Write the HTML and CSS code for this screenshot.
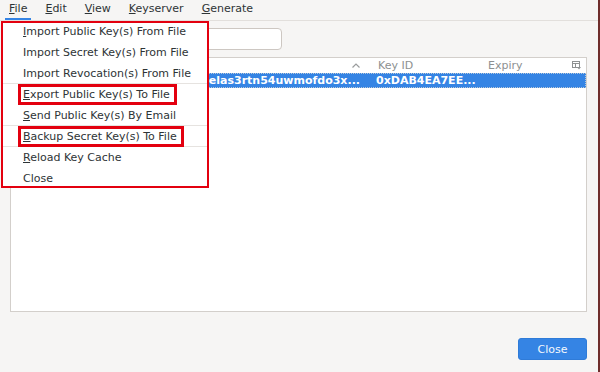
FILE: index.html
```html
<!DOCTYPE html>
<html>
<head>
    <title>Kleopatra</title>
    <link rel="stylesheet" href="styles.css">
</head>
<body>
    <div class="window">
        <nav class="menubar">
            <span class="menubar-item active"><u>F</u>ile</span>
            <span class="menubar-item"><u>E</u>dit</span>
            <span class="menubar-item"><u>V</u>iew</span>
            <span class="menubar-item"><u>K</u>eyserver</span>
            <span class="menubar-item"><u>G</u>enerate</span>
        </nav>

        <main class="content">
            <div class="search-row">
                <div class="search-entry"></div>
            </div>

            <div class="key-table">
                <div class="table-head">
                    <div class="col col-name">
                        <svg class="sort-arrow" width="8" height="5" viewBox="0 0 8 5">
                            <polyline points="0.5,4.5 4,1 7.5,4.5" fill="none" stroke="#9a9c9d" stroke-width="1.2"/>
                        </svg>
                    </div>
                    <div class="col col-id">Key ID</div>
                    <div class="col col-expiry">Expiry</div>
                    <div class="col col-menu">
                        <svg width="9" height="9" viewBox="0 0 9 9">
                            <rect x="0.5" y="0.5" width="7" height="6" fill="none" stroke="#8e9192"/>
                            <line x1="0.5" y1="2.5" x2="7.5" y2="2.5" stroke="#8e9192"/>
                            <line x1="3.5" y1="2.5" x2="3.5" y2="6.5" stroke="#8e9192"/>
                            <polygon points="5,6 9,6 7,8.5" fill="#8e9192"/>
                        </svg>
                    </div>
                </div>
                <div class="table-row selected">
                    <div class="col col-name">elas3rtn54uwmofdo3x...</div>
                    <div class="col col-id">0xDAB4EA7EE...</div>
                    <div class="col col-expiry"></div>
                    <div class="col col-menu"></div>
                </div>
            </div>

            <div class="footer">
                <button class="btn-close">Close</button>
            </div>
        </main>

        <div class="file-menu">
            <div class="menu-list">
                <div class="menu-item"><span><u>I</u>mport Public Key(s) From File</span></div>
                <div class="menu-item"><span>Import Secret Key(s) From File</span></div>
                <div class="menu-item sep"><span>Import Revocation(s) From File</span></div>
                <div class="menu-item"><span class="marked"><u>E</u>xport Public Key(s) To File</span></div>
                <div class="menu-item sep"><span><u>S</u>end Public Key(s) By Email</span></div>
                <div class="menu-item sep"><span class="marked"><u>B</u>ackup Secret Key(s) To File</span></div>
                <div class="menu-item"><span><u>R</u>eload Key Cache</span></div>
                <div class="menu-item"><span>Close</span></div>
            </div>
        </div>
    </div>
</body>
</html>
```

FILE: styles.css
```css
body {
    margin: 0;
    padding: 0;
    background-color: #f6f5f4;
    font-family: "DejaVu Sans", sans-serif;
    font-size: 11px;
    color: #2e3436;
}

.window {
    position: relative;
    height: 372px;
    border-right: 2px solid #6e2d2b;
    box-sizing: border-box;
    display: flex;
    flex-direction: column;
}

/* menubar */
.menubar {
    display: flex;
    height: 20px;
    border-bottom: 1px solid #e2dfdc;
}

.menubar-item {
    margin: 0 5px;
    padding: 0 4px;
    line-height: 18px;
    border-bottom: 2px solid transparent;
}

.menubar-item.active {
    border-bottom-color: #3584e4;
}

/* main area */
.content {
    flex: 1;
    display: flex;
    flex-direction: column;
    padding: 7px 11px 0 10px;
}

.search-row {
    display: flex;
    height: 22px;
}

.search-entry {
    width: 272px;
    background-color: #ffffff;
    border: 1px solid #cdc7c2;
    border-radius: 4px;
    box-sizing: border-box;
}

.key-table {
    margin-top: 7px;
    height: 255px;
    background-color: #ffffff;
    border: 1px solid #d3cfcb;
    box-sizing: border-box;
}

.table-head,
.table-row {
    display: grid;
    grid-template-columns: 359px 112px 84px 20px;
    height: 15px;
    align-items: center;
}

.table-head {
    color: #8d9091;
}

.table-head .col-name {
    display: flex;
    justify-content: flex-end;
    padding-right: 10px;
}

.table-head .col-id {
    padding-left: 8px;
}

.col {
    white-space: nowrap;
    overflow: hidden;
}

.col-expiry {
    padding-left: 6px;
}

.col-menu {
    display: flex;
    padding-left: 6px;
}

.table-row.selected {
    background-color: #3584e4;
    color: #ffffff;
    font-weight: bold;
    outline: 1px dotted #b9c8d8;
    outline-offset: -1px;
}

.table-row .col-name {
    text-align: right;
    padding-right: 10px;
}

.table-row .col-id {
    padding-left: 6px;
}

/* bottom buttons */
.footer {
    display: flex;
    justify-content: flex-end;
    padding-top: 26px;
}

.btn-close {
    width: 69px;
    height: 22px;
    border: 1px solid #2f7bd8;
    border-radius: 3px;
    background-color: #3584e4;
    color: #f4f8fd;
    font-family: "DejaVu Sans", sans-serif;
    font-size: 11px;
    padding: 0;
}

/* open File menu */
.file-menu {
    position: absolute;
    left: 1px;
    top: 21px;
    width: 208px;
    height: 167px;
    border: 2px solid #e3000f;
    background-color: #ffffff;
    box-sizing: border-box;
}

.menu-list {
    margin-top: -2px;
}

.menu-item {
    display: flex;
    align-items: center;
    height: 21px;
    padding-left: 20px;
    box-sizing: border-box;
}

.menu-item.sep {
    border-bottom: 1px solid #e6e3e0;
}

.marked {
    display: inline-block;
    line-height: 15px;
    border: 3px solid #e3000f;
    padding: 0 4px 0 2px;
    margin-left: -5px;
}
```
